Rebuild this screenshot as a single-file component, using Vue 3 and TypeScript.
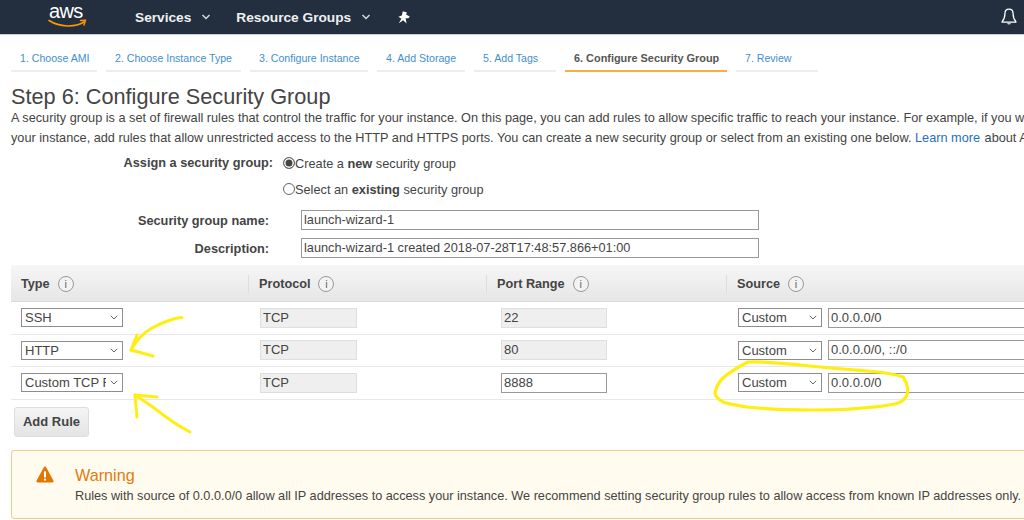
<script setup lang="ts">
interface Step { label: string; width: number; active?: boolean }
const steps: Step[] = [
  { label: '1. Choose AMI', width: 86 },
  { label: '2. Choose Instance Type', width: 135 },
  { label: '3. Configure Instance', width: 118 },
  { label: '4. Add Storage', width: 88 },
  { label: '5. Add Tags', width: 82 },
  { label: '6. Configure Security Group', width: 162, active: true },
  { label: '7. Review', width: 82 },
]
const columns = ['Type', 'Protocol', 'Port Range', 'Source']
interface Row { type: string; port: string; editable: boolean; source: string }
const rows: Row[] = [
  { type: 'SSH', port: '22', editable: false, source: '0.0.0.0/0' },
  { type: 'HTTP', port: '80', editable: false, source: '0.0.0.0/0, ::/0' },
  { type: 'Custom TCP Rule', port: '8888', editable: true, source: '0.0.0.0/0' },
]
</script>

<template>
  <div class="page">
    <header class="topbar">
      <div class="logo">
        <span class="logo-text">aws</span>
        <svg class="smile" width="40" height="10" viewBox="0 0 40 10">
          <path d="M1 1.5C12 8.5 27 8.5 36 3" fill="none" stroke="#f90" stroke-width="1.6" stroke-linecap="round" />
          <path d="M32.5 1.5L37.5 1.2L36 6" fill="none" stroke="#f90" stroke-width="1.4" stroke-linecap="round" />
        </svg>
      </div>
      <nav class="menu">
        <span class="menu-item services">Services
          <svg width="10" height="6" viewBox="0 0 10 6"><path d="M1.5 1L5 4.5L8.5 1" fill="none" stroke="#d5dbdb" stroke-width="1.5" /></svg>
        </span>
        <span class="menu-item">Resource Groups
          <svg width="10" height="6" viewBox="0 0 10 6"><path d="M1.5 1L5 4.5L8.5 1" fill="none" stroke="#d5dbdb" stroke-width="1.5" /></svg>
        </span>
        <svg class="pin" width="12" height="13" viewBox="0 0 12 13">
          <path d="M4.8 .3L9 1.6L8 3.4L11.8 5.6L10.4 7.2L7.6 7.2L8.6 12.6L5.2 9.2L.8 12.2L3.4 7.8L.4 5.8L3.8 4.6Z" fill="#fff" />
        </svg>
      </nav>
      <svg class="bell" width="16" height="18" viewBox="0 0 16 18">
        <path d="M8 1.2C5.2 1.2 3.9 3.4 3.9 6C3.9 9.5 3 11.5 1.2 13.4V14.2H14.8V13.4C13 11.5 12.1 9.5 12.1 6C12.1 3.4 10.8 1.2 8 1.2Z" fill="none" stroke="#fff" stroke-width="1.3" />
        <path d="M6.2 15.2C6.4 16.8 9.6 16.8 9.8 15.2Z" fill="#fff" />
      </svg>
    </header>

    <ol class="steps">
      <li v-for="s in steps" :key="s.label" class="step" :class="{ active: s.active }" :style="{ width: s.width + 'px' }">{{ s.label }}</li>
    </ol>

    <h1 class="title">Step 6: Configure Security Group</h1>
    <p class="intro">A security group is a set of firewall rules that control the traffic for your instance. On this page, you can add rules to allow specific traffic to reach your instance. For example, if you want to set up a web server and allow Internet traffic to reach</p>
    <p class="intro">your instance, add rules that allow unrestricted access to the HTTP and HTTPS ports. You can create a new security group or select from an existing one below. <a class="link">Learn more</a> about Amazon EC2 security groups.</p>

    <section class="form">
      <div class="assign">
        <span class="assign-label">Assign a security group:</span>
        <div class="radios">
          <label class="radio"><i class="dot on"></i>Create a&nbsp;<b>new</b>&nbsp;security group</label>
          <label class="radio"><i class="dot"></i>Select an&nbsp;<b>existing</b>&nbsp;security group</label>
        </div>
      </div>
      <div class="field">
        <span class="field-label">Security group name:</span>
        <div class="text-box wide">launch-wizard-1</div>
      </div>
      <div class="field">
        <span class="field-label">Description:</span>
        <div class="text-box wide">launch-wizard-1 created 2018-07-28T17:48:57.866+01:00</div>
      </div>
    </section>

    <section class="table">
      <div class="thead">
        <div v-for="c in columns" :key="c" class="th">
          {{ c }}
          <span class="info">i</span>
        </div>
      </div>
      <div v-for="r in rows" :key="r.port" class="tr">
        <div class="td">
          <div class="select type-select"><span class="select-text">{{ r.type }}</span>
            <svg class="chev" width="8" height="5" viewBox="0 0 8 5"><path d="M.8 .8L4 4L7.2 .8" fill="none" stroke="#666" stroke-width="1" /></svg>
          </div>
        </div>
        <div class="td"><div class="readonly proto">TCP</div></div>
        <div class="td">
          <div class="port" :class="r.editable ? 'port-edit' : 'readonly'">{{ r.port }}</div>
        </div>
        <div class="td source">
          <div class="select src-select"><span class="select-text">Custom</span>
            <svg class="chev" width="8" height="5" viewBox="0 0 8 5"><path d="M.8 .8L4 4L7.2 .8" fill="none" stroke="#666" stroke-width="1" /></svg>
          </div>
          <div class="text-box cidr">{{ r.source }}</div>
        </div>
      </div>
    </section>

    <button class="add-rule" type="button">Add Rule</button>

    <section class="warning">
      <svg class="warn-icon" width="18" height="17" viewBox="0 0 18 17">
        <path d="M9 .6C9.6 .6 10 .9 10.3 1.4L17.4 14.4C17.9 15.4 17.3 16.4 16.2 16.4H1.8C.7 16.4 .1 15.4 .6 14.4L7.7 1.4C8 .9 8.4 .6 9 .6Z" fill="#e07700" />
        <rect x="8" y="5.4" width="2" height="6" fill="#fff" />
        <rect x="8" y="12.6" width="2" height="2" fill="#fff" />
      </svg>
      <div>
        <div class="warn-title">Warning</div>
        <div class="warn-text">Rules with source of 0.0.0.0/0 allow all IP addresses to access your instance. We recommend setting security group rules to allow access from known IP addresses only.</div>
      </div>
    </section>

    <svg class="marks" width="1024" height="520" viewBox="0 0 1024 520">
      <g fill="none" stroke="#ffee11" stroke-linecap="round" stroke-linejoin="round">
        <g stroke-width="3">
          <path d="M182 317.5C176 317.5 163 322 152 328C143 333 136 341 131 350" />
          <path d="M137 335L131 350L153 356" />
          <path d="M190 432C182 428 174 423 166 417C156 409 146 402 135 395" />
          <path d="M137 417L135 395L157 397" />
        </g>
        <path stroke-width="3.2" d="M748 362C765 361 790 364 820 367C840 369 855 370 867 371C880 372 895 374 903 377C908 384 909 392 906 397C903 401 900 403 895 404C885 406 875 407 863 408C845 410 830 410 813 410C790 410 765 409 747 407C735 405 728 404 723 402C718 399 715 396 715 393C716 388 719 382 723 378C730 372 738 367 748 362" />
      </g>
    </svg>
  </div>
</template>

<style>
html, body { margin: 0; background: #fff; overflow: hidden; }
</style>

<style scoped>
.page {
  position: relative;
  width: 1024px;
  height: 520px;
  overflow: hidden;
  background: #fff;
  color: #444;
  font-family: "Liberation Sans", Arial, sans-serif;
  font-size: 12.75px;
}
.topbar {
  display: flex;
  align-items: center;
  height: 34px;
  background: #232f3e;
  border-bottom: 1px solid #c8ccd0;
  color: #fff;
}
.logo {
  display: flex;
  flex-direction: column;
  width: 40px;
  margin-left: 48px;
  height: 34px;
}
.logo-text {
  font-size: 20px;
  line-height: 20px;
  margin-top: 1px;
  padding-left: 1px;
  letter-spacing: -.6px;
}
.smile { margin-top: -2px; }
.menu {
  display: flex;
  align-items: center;
  margin-left: 47px;
  flex: 1;
}
.menu-item {
  display: flex;
  align-items: center;
  gap: 10px;
  font-size: 13.7px;
  font-weight: 700;
  color: #eef0f1;
}
.menu-item.services { margin-right: 25px; }
.pin { margin-left: 27px; }
.bell { margin-right: 7px; }
.steps {
  display: flex;
  gap: 9px;
  list-style: none;
  margin: 14px 0 0 11px;
  padding: 0;
}
.step {
  box-sizing: border-box;
  height: 23px;
  padding: 2px 0 0 9px;
  text-align: left;
  font-size: 10.6px;
  line-height: 14px;
  color: #3f8fd0;
  border-bottom: 2px solid #eee;
  white-space: nowrap;
}
.step.active {
  color: #555;
  font-size: 10.9px;
  font-weight: 700;
  border-bottom-color: #f9ae44;
}
.title {
  margin: 13px 0 0 11px;
  font-size: 21.7px;
  line-height: 23px;
  font-weight: 400;
  color: #444;
}
.intro {
  margin: 0 0 0 11px;
  font-size: 12.72px;
  line-height: 20px;
  white-space: nowrap;
}
.link { color: #1f6fc9; margin-right: 1px; }
.form { margin-top: 2px; }
.assign {
  display: flex;
  align-items: flex-start;
  margin-bottom: 4px;
}
.assign-label {
  width: 273px;
  text-align: right;
  font-weight: 700;
  line-height: 26px;
  margin-right: 10px;
}
.radios { display: flex; flex-direction: column; }
.radio {
  display: flex;
  align-items: center;
  height: 26px;
  white-space: nowrap;
}
.dot {
  box-sizing: border-box;
  width: 12px;
  height: 12px;
  border: 1px solid #666;
  border-radius: 50%;
  background: #fff;
}
.dot.on { background: #444; box-shadow: inset 0 0 0 1.5px #fff; }
.field {
  display: flex;
  align-items: center;
  height: 28px;
}
.field-label {
  width: 269px;
  margin-right: 32px;
  text-align: right;
  font-weight: 700;
}
.text-box {
  box-sizing: border-box;
  height: 20px;
  padding-left: 2px;
  line-height: 18px;
  border: 1px solid #999;
  background: #fff;
  white-space: nowrap;
}
.wide { width: 458px; }
.table {
  margin: 3px 0 0 11px;
  width: 1013px;
  font-size: 13px;
}
.thead {
  display: grid;
  grid-template-columns: 237px 238px 240px 1fr;
  height: 37px;
  background: linear-gradient(#f6f6f6, #e6e6e6);
  border-bottom: 1px solid #dcdcdc;
  box-sizing: border-box;
  align-items: center;
}
.th {
  display: flex;
  align-items: center;
  gap: 8px;
  height: 18px;
  margin-top: 1px;
  padding-left: 10px;
  font-weight: 700;
  font-size: 12.7px;
  border-left: 1px solid #ddd;
}
.th:first-child { border-left: 0; }
.info {
  box-sizing: border-box;
  width: 16px;
  height: 16px;
  border: 1px solid #999;
  border-radius: 50%;
  background: #f3f3f3;
  color: #666;
  font-size: 11px;
  font-weight: 400;
  line-height: 14px;
  text-align: center;
}
.tr {
  display: grid;
  grid-template-columns: 237px 238px 240px 1fr;
  align-items: center;
  height: 32.5px;
  border-bottom: 1px solid #e8e8e8;
  box-sizing: border-box;
}
.td { padding-left: 10px; }
.select {
  position: relative;
  box-sizing: border-box;
  height: 19px;
  border: 1px solid #8d8d8d;
  background: #fff;
  line-height: 17px;
}
.select-text {
  display: block;
  padding-left: 3px;
  overflow: hidden;
  white-space: nowrap;
  width: calc(100% - 19px);
}
.chev { position: absolute; right: 4px; top: 6px; }
.type-select { width: 102px; }
.src-select { width: 84px; flex: none; }
.readonly {
  box-sizing: border-box;
  height: 20px;
  padding-left: 2px;
  line-height: 18px;
  background: #efefef;
  border: 1px solid #dedede;
}
.proto { width: 97px; margin-left: 2px; }
.port { width: 106px; box-sizing: border-box; height: 20px; padding-left: 2px; line-height: 18px; margin-left: 5px; }
.port-edit { border: 1px solid #999; background: #fff; }
.source { display: flex; align-items: center; gap: 6px; padding-left: 12px; }
.cidr { width: 240px; flex: none; }
.add-rule {
  display: block;
  box-sizing: border-box;
  width: 75px;
  height: 30px;
  margin: 7.5px 0 0 14px;
  padding: 0 0 2px;
  border: 1px solid #ddd;
  border-radius: 3px;
  background: linear-gradient(#f5f5f5, #e4e4e4);
  color: #444;
  font: 700 13px "Liberation Sans", Arial, sans-serif;
}
.warning {
  display: flex;
  box-sizing: border-box;
  width: 1030px;
  height: 69px;
  margin: 13px 0 0 11px;
  padding: 14px 0 0 24px;
  background: #fffbee;
  border: 1px solid #f6c78a;
  border-radius: 3px;
}
.warn-icon { flex: none; margin: 1px 21px 0 0; }
.warn-title {
  font-size: 16.2px;
  line-height: 20px;
  color: #e07b12;
}
.warn-text {
  margin-top: 2px;
  font-size: 12.7px;
  line-height: 18px;
  white-space: nowrap;
}
.marks {
  position: absolute;
  left: 0;
  top: 0;
  pointer-events: none;
}
</style>
